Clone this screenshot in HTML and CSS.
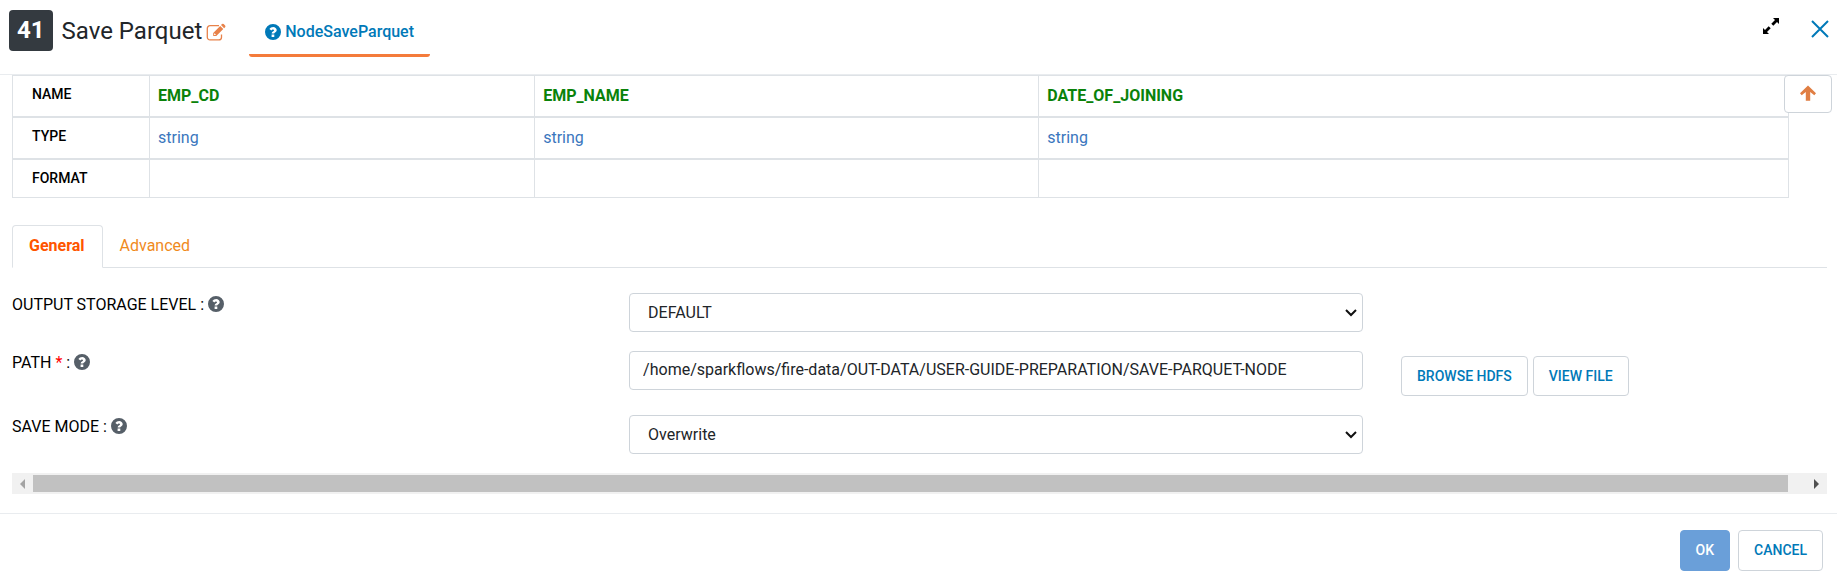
FILE: index.html
```
<!DOCTYPE html>
<html lang="en">
<head>
<meta charset="utf-8">
<meta name="viewport" content="width=device-width, initial-scale=1">
<title>Save Parquet</title>
<link rel="stylesheet" href="styles.css">
</head>
<body>
<svg class="defs" width="0" height="0" aria-hidden="true">
  <symbol id="help" viewBox="0 0 16 16">
    <path fill-rule="evenodd" d="M8 0a8 8 0 1 1 0 16A8 8 0 0 1 8 0ZM4.400 5.100 6.400 6.600C7 5.800 7.400 5.500 8 5.500c.6 0 1 .3 1 .7 0 .6-.5.8-1.100 1.200-.8.500-1.200 1.100-1.200 1.900v.3h2.500c0-.5.300-.7.900-1.100.9-.5 1.600-1.200 1.600-2.400 0-1.900-1.600-3.200-3.500-3.200-1.700 0-2.900.8-3.800 2.200ZM6.600 10.500v2.600h2.700v-2.600Z"/>
  </symbol>
</svg>
<main class="dialog">
  <header class="header">
    <span class="badge">41</span>
    <h1 class="title">Save Parquet</h1>
    <button class="icon-button edit" type="button" aria-label="Rename">
      <svg width="20" height="18" viewBox="0 0 20 18" fill="none">
        <path d="M13 2.700H4A2.700 2.700 0 0 0 1.300 5.400v8.800A2.700 2.700 0 0 0 4 16.900h8.800a2.700 2.700 0 0 0 2.700-2.700V11.500" stroke="currentColor" stroke-width="1.300"/>
        <path fill="currentColor" fill-rule="evenodd" d="M14.200 2.900 17.300 6l-7 7H7.200V9.900ZM8.600 10.300l-.5.600v1.200h1.200l.6-.5ZM15 2.100l1-1a1.200 1.200 0 0 1 1.700 0l1.400 1.400a1.200 1.200 0 0 1 0 1.700l-1 1Z"/>
      </svg>
    </button>
    <a class="node-link" href="#help"><svg class="help" aria-hidden="true"><use href="#help"/></svg>NodeSaveParquet</a>
    <div class="window-actions">
      <button class="icon-button" type="button" aria-label="Expand">
        <svg width="16" height="16" viewBox="0 0 16 16" fill="#000"><path d="M10 0h6v6l-2-2-3.700 3.700-2-2L12 2ZM5.700 8.300l2 2L4 14l2 2H0v-6l2 2Z"/></svg>
      </button>
      <button class="icon-button close" type="button" aria-label="Close">
        <svg width="18" height="18" viewBox="0 0 18 18" fill="none" stroke="currentColor" stroke-width="2"><path d="m1 1 16 16M17 1 1 17"/></svg>
      </button>
    </div>
  </header>

  <section class="body">
    <div class="schema">
      <table class="schema-table">
        <colgroup><col class="col-head"><col class="col-code"><col class="col-name"><col></colgroup>
        <tr><th scope="row">NAME</th><td class="field">EMP_CD</td><td class="field">EMP_NAME</td><td class="field">DATE_OF_JOINING</td></tr>
        <tr><th scope="row">TYPE</th><td>string</td><td>string</td><td>string</td></tr>
        <tr class="last"><th scope="row">FORMAT</th><td></td><td></td><td></td></tr>
      </table>
      <button class="button to-top" type="button" aria-label="Collapse schema">
        <svg width="16" height="16" viewBox="0 0 16 16" fill="currentColor"><path d="M8 .4 16 8.300 14.300 10.300 10.200 7v8.700H5.800V7L1.700 10.300 0 8.300Z"/></svg>
      </button>
    </div>

    <nav class="tabs">
      <a class="tab active" href="#general">General</a>
      <a class="tab" href="#advanced">Advanced</a>
    </nav>

    <form class="form" id="general">
      <div class="row">
        <label for="level">OUTPUT STORAGE LEVEL : <svg class="help" aria-hidden="true"><use href="#help"/></svg></label>
        <div class="select-box">
          <select class="control" id="level"><option>DEFAULT</option></select>
          <svg class="chevron" viewBox="0 0 12 8"><path d="m1 1 5 5 5-5"/></svg>
        </div>
      </div>
      <div class="row path-row">
        <label for="path">PATH <span class="required">*</span> : <svg class="help" aria-hidden="true"><use href="#help"/></svg></label>
        <input class="control" id="path" type="text" value="/home/sparkflows/fire-data/OUT-DATA/USER-GUIDE-PREPARATION/SAVE-PARQUET-NODE">
        <div class="path-actions">
          <button class="button" type="button">BROWSE HDFS</button>
          <button class="button" type="button">VIEW FILE</button>
        </div>
      </div>
      <div class="row">
        <label for="mode">SAVE MODE : <svg class="help" aria-hidden="true"><use href="#help"/></svg></label>
        <div class="select-box">
          <select class="control" id="mode"><option>Overwrite</option></select>
          <svg class="chevron" viewBox="0 0 12 8"><path d="m1 1 5 5 5-5"/></svg>
        </div>
      </div>
    </form>

    <div class="scrollbar" aria-hidden="true">
      <svg class="scroll-left" width="5" height="10" viewBox="0 0 5 10"><path d="M5 0v10L0 5Z"/></svg>
      <div class="thumb"></div>
      <svg class="scroll-right" width="5" height="10" viewBox="0 0 5 10"><path d="M0 0v10l5-5Z"/></svg>
    </div>
  </section>

  <footer class="footer">
    <button class="button primary" type="button">OK</button>
    <button class="button" type="button">CANCEL</button>
  </footer>
</main>
</body>
</html>
```
FILE: styles.css
```
* { box-sizing: border-box; }
body {
  margin: 0;
  background: #fff;
  color: #000;
  font: 400 16px/24px Roboto, sans-serif;
}
button, input, select { font: inherit; }
a { text-decoration: none; }
.defs { position: absolute; }

.header {
  display: flex;
  align-items: flex-start;
  height: 75px;
  padding: 10px 8px 0 9px;
  border-bottom: 1px solid #e9ecef;
}
.badge {
  padding: 0 8px;
  border-radius: 4px;
  background: #343a40;
  color: #fff;
  font-size: 24px;
  font-weight: 700;
  line-height: 41px;
}
.title {
  margin: 0 4px 0 9px;
  color: #212529;
  font-size: 24px;
  font-weight: 400;
  line-height: 42px;
}
.icon-button {
  display: flex;
  padding: 0;
  border: 0;
  background: none;
  color: #0079b8;
}
.edit { margin-top: 13px; color: #e8824a; }
.help {
  width: 16px;
  height: 16px;
  fill: #565f68;
  vertical-align: -2px;
}
.node-link {
  display: flex;
  align-items: center;
  gap: 4px;
  height: 47px;
  margin-left: 23px;
  padding: 0 16px 1px;
  border-bottom: 3px solid #f47b3b;
  border-radius: 3px;
  color: #0079b8;
  font-weight: 500;
}
.node-link .help { fill: #0079b8; }
.window-actions {
  display: flex;
  gap: 32px;
  margin-left: auto;
  padding-top: 8px;
}
.close { padding-top: 2px; }

.body { padding: 0 10px 19px 12px; }
.schema { position: relative; padding-right: 38px; }
.schema-table {
  width: 100%;
  border: 1px solid #dee2e6;
  border-collapse: separate;
  border-spacing: 0;
  table-layout: fixed;
}
.col-head { width: 136px; }
.col-code { width: 21.7%; }
.col-name { width: 28.4%; }
.schema-table th, .schema-table td {
  height: 42px;
  padding: 8px;
  border-bottom: 2px solid #dee2e6;
  text-align: left;
  vertical-align: top;
}
.schema-table th {
  padding: 6px 19px;
  font-size: 14px;
  font-weight: 500;
}
.schema-table td { border-left: 1px solid #dee2e6; color: #3a76bd; }
.schema-table .field { color: #0a820a; font-weight: 700; }
.schema-table .last th, .schema-table .last td { height: 37px; border-bottom: 0; }

.button {
  height: 40px;
  padding: 0 15px;
  border: 1px solid #ced4da;
  border-radius: 4px;
  background: #fff;
  color: #0079b8;
  font-size: 14px;
  font-weight: 500;
}
.to-top {
  position: absolute;
  top: 0;
  right: -5px;
  display: grid;
  place-items: center;
  width: 48px;
  height: 38px;
  padding-bottom: 2px;
  color: #e07e43;
}

.tabs {
  display: flex;
  margin-top: 27px;
  border-bottom: 1px solid #dee2e6;
}
.tab {
  margin-bottom: -1px;
  padding: 8px 17px 9px 16px;
  border: 1px solid transparent;
  border-radius: 4px 4px 0 0;
  color: #f08a1d;
}
.tab.active {
  border-color: #dee2e6 #dee2e6 #fff;
  background: #fff;
  color: #ff5500;
  font-weight: 700;
}

.form { padding-top: 25px; }
.row {
  display: grid;
  grid-template-columns: 34% 734fr 464fr;
  align-items: start;
  min-height: 58px;
}
.path-row { min-height: 64px; }
.control {
  display: block;
  width: 100%;
  height: 39px;
  padding: 0 13px 2px;
  border: 1px solid #ced4da;
  border-radius: 4px;
  background: #fff;
  color: #212529;
}
select.control { padding: 0 18px; appearance: none; }
.select-box { position: relative; }
.chevron {
  position: absolute;
  top: 16px;
  right: 6px;
  width: 12px;
  height: 8px;
  fill: none;
  stroke: #111;
  stroke-width: 2;
  pointer-events: none;
}
.required { color: #f00; }
.path-actions {
  display: flex;
  gap: 5px;
  padding: 5px 0 0 38px;
}

.scrollbar {
  display: flex;
  align-items: center;
  height: 21px;
  background: #f1f1f1;
}
.thumb {
  flex: 1;
  height: 17px;
  margin: 0 26px 0 8px;
  background: #c1c1c1;
}
.scroll-left { margin-left: 8px; fill: #a3a3a3; }
.scroll-right { margin-right: 8px; fill: #505050; }

.footer {
  display: flex;
  justify-content: flex-end;
  gap: 8px;
  padding: 16px 14px 12px;
  border-top: 1px solid #e9ecef;
}
.footer .button { height: 41px; padding-bottom: 2px; }
.footer .primary {
  border-color: #6a9fd9;
  background: #6a9fd9;
  color: #fff;
}
```
